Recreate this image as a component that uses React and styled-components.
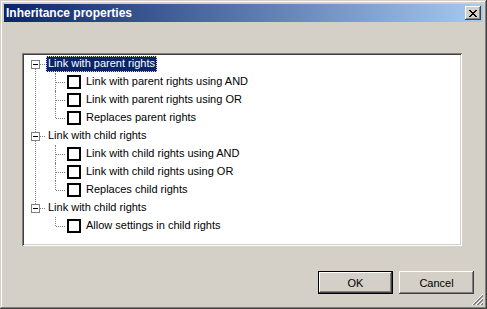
import React from 'react'
import styled, { createGlobalStyle } from 'styled-components'

const Global = createGlobalStyle`
  html, body { margin: 0; padding: 0; background: #d4d0c8; }
  body { font-family: "Liberation Sans", Arial, sans-serif; font-size: 11px; }
`

const Window = styled.div`
  position: relative;
  width: 487px;
  height: 309px;
  box-sizing: border-box;
  padding: 4px;
  background: #d4d0c8;
  box-shadow: inset -1px -1px #404040, inset 1px 1px #d4d0c8,
    inset -2px -2px #808080, inset 2px 2px #ffffff;
  display: flex;
  flex-direction: column;
`

const TitleBar = styled.div`
  height: 18px;
  display: flex;
  align-items: center;
  justify-content: space-between;
  padding: 0 2px 0 2px;
  background: linear-gradient(to right, #0a246a, #a6caf0);
  color: #fff;
  font-weight: bold;
  font-size: 12px;
`

const CloseButton = styled.div`
  width: 16px;
  height: 14px;
  background: #d4d0c8;
  box-shadow: inset -1px -1px #404040, inset 1px 1px #ffffff,
    inset -2px -2px #808080;
  display: flex;
  align-items: center;
  justify-content: center;
`

const Body = styled.div`
  flex: 1;
  display: flex;
  flex-direction: column;
  padding: 31px 9px 11px 18px;
`

const TreePanel = styled.div`
  width: 440px;
  height: 193px;
  box-sizing: border-box;
  background: #fff;
  padding: 2px;
  box-shadow: inset 1px 1px #808080, inset -1px -1px #ffffff,
    inset 2px 2px #404040, inset -2px -2px #d4d0c8;
`

const Group = styled.div`
  position: relative;
  &:not(:last-child)::before {
    content: '';
    position: absolute;
    left: 11px;
    top: 9px;
    bottom: -9px;
    border-left: 1px dotted #808080;
  }
`

const GroupRow = styled.div`
  position: relative;
  height: 18px;
  display: flex;
  align-items: center;
  padding-left: 22px;
  &::after {
    content: '';
    position: absolute;
    left: 16px;
    top: 9px;
    width: 5px;
    border-top: 1px dotted #808080;
  }
`

const ExpandBox = styled.div`
  position: absolute;
  left: 7px;
  top: 5px;
  width: 9px;
  height: 9px;
  box-sizing: border-box;
  border: 1px solid #808080;
  background: #fff;
  z-index: 1;
  &::after {
    content: '';
    position: absolute;
    left: 1px;
    top: 3px;
    width: 5px;
    height: 1px;
    background: #000;
  }
`

const Label = styled.span`
  padding: 1px 2px 2px;
  line-height: 13px;
  color: ${p => (p.$selected ? '#fff' : '#000')};
  background: ${p => (p.$selected ? '#0a246a' : 'transparent')};
  outline: ${p => (p.$selected ? '1px dotted #f0e060' : 'none')};
  outline-offset: -1px;
  white-space: nowrap;
`

const ChildRow = styled.div`
  position: relative;
  height: 18px;
  display: flex;
  align-items: center;
  padding-left: 43px;
  gap: 3px;
  &::before {
    content: '';
    position: absolute;
    left: 31px;
    top: 0;
    height: ${p => (p.$last ? '9px' : '18px')};
    border-left: 1px dotted #808080;
  }
  &::after {
    content: '';
    position: absolute;
    left: 32px;
    top: 9px;
    width: 9px;
    border-top: 1px dotted #808080;
  }
`

const Check = styled.div`
  width: 14px;
  height: 14px;
  box-sizing: border-box;
  border: 2px solid #000;
  background: #fff;
`

const Footer = styled.div`
  margin-top: auto;
  display: flex;
  justify-content: flex-end;
  gap: 6px;
`

const Button = styled.div`
  width: 75px;
  height: 23px;
  box-sizing: border-box;
  display: flex;
  align-items: center;
  justify-content: center;
  background: #d4d0c8;
  color: #000;
  border: ${p => (p.$default ? '1px solid #000' : 'none')};
  box-shadow: inset -1px -1px #404040, inset 1px 1px #ffffff,
    inset -2px -2px #808080;
`

const Grip = styled.svg`
  position: absolute;
  right: 3px;
  bottom: 3px;
`

const tree = [
  {
    label: 'Link with parent rights',
    selected: true,
    items: ['Link with parent rights using AND', 'Link with parent rights using OR', 'Replaces parent rights'],
  },
  {
    label: 'Link with child rights',
    items: ['Link with child rights using AND', 'Link with child rights using OR', 'Replaces child rights'],
  },
  {
    label: 'Link with child rights',
    items: ['Allow settings in child rights'],
  },
]

export default function App() {
  return (
    <>
      <Global />
      <Window>
        <TitleBar>
          <span>Inheritance properties</span>
          <CloseButton>
            <svg width="8" height="7" viewBox="0 0 8 7" shapeRendering="crispEdges">
              <path d="M0 0h2v1H0zM6 0h2v1H6zM1 1h2v1H1zM5 1h2v1H5zM2 2h4v1H2zM3 3h2v1H3zM2 4h4v1H2zM1 5h2v1H1zM5 5h2v1H5zM0 6h2v1H0zM6 6h2v1H6z" fill="#000" />
            </svg>
          </CloseButton>
        </TitleBar>
        <Body>
          <TreePanel>
            {tree.map((g, i) => (
              <Group key={i}>
                <GroupRow>
                  <ExpandBox />
                  <Label $selected={g.selected}>{g.label}</Label>
                </GroupRow>
                {g.items.map((it, j) => (
                  <ChildRow key={j} $last={j === g.items.length - 1}>
                    <Check />
                    <Label>{it}</Label>
                  </ChildRow>
                ))}
              </Group>
            ))}
          </TreePanel>
          <Footer>
            <Button $default>OK</Button>
            <Button>Cancel</Button>
          </Footer>
        </Body>
        <Grip width="12" height="12" viewBox="0 0 12 12" shapeRendering="crispEdges">
          <path d="M11 0L0 11M11 4L4 11M11 8L8 11" stroke="#fff" strokeWidth="1" />
          <path d="M11 1L1 11M11 2L2 11M11 5L5 11M11 6L6 11M11 9L9 11M11 10L10 11" stroke="#808080" strokeWidth="1" />
        </Grip>
      </Window>
    </>
  )
}
